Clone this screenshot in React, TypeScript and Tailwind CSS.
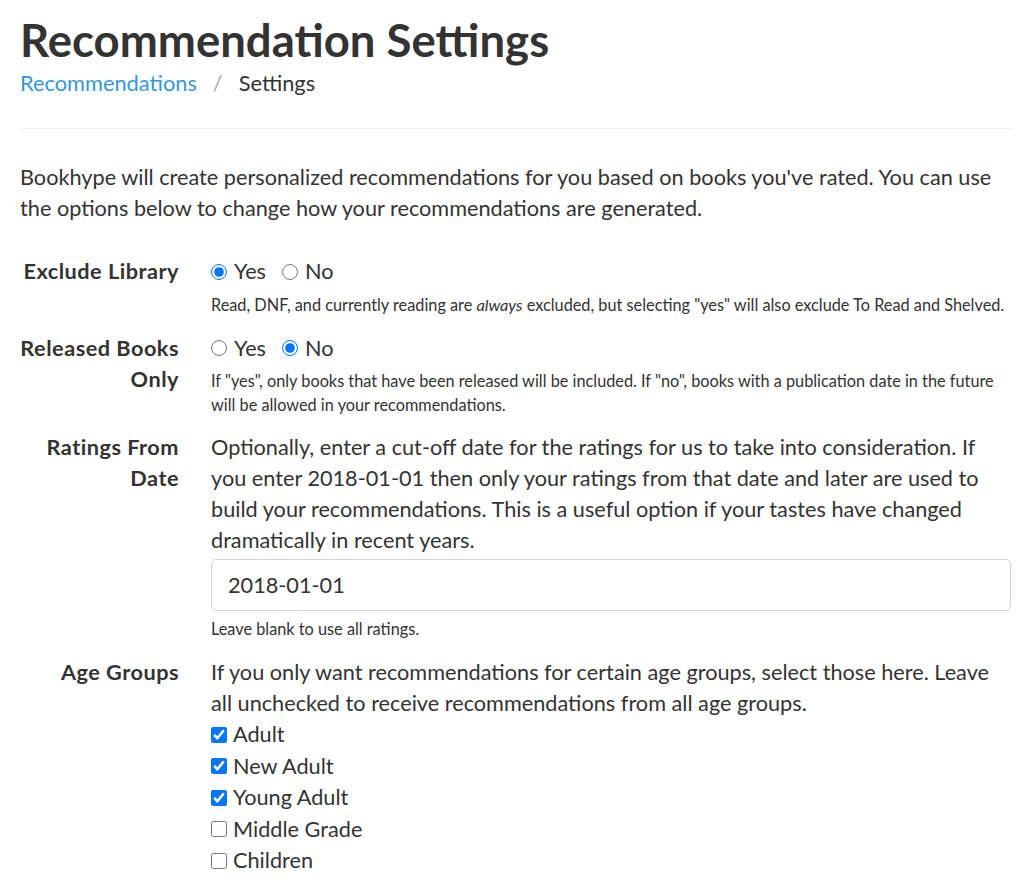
import React from "react";

const font = { fontFamily: 'Lato, "Open Sans", sans-serif' };

function Label({ children }: { children: React.ReactNode }) {
  return (
    <div className="w-[175px] shrink-0 pr-4 text-right font-bold tracking-[0.5px] text-[#333]">
      {children}
    </div>
  );
}

function Radio({ checked, label, name }: { checked: boolean; label: string; name: string }) {
  return (
    <label className="mr-4 inline-flex items-center">
      <input type="radio" name={name} defaultChecked={checked} className="m-0 mr-[7px] h-4 w-4" />
      <span>{label}</span>
    </label>
  );
}

function Check({ checked, label }: { checked: boolean; label: string }) {
  return (
    <label className="flex h-[31.5px] items-center">
      <input type="checkbox" defaultChecked={checked} className="m-0 mr-[6px] h-4 w-4" />
      <span>{label}</span>
    </label>
  );
}

export default function App() {
  return (
    <div className="min-h-screen bg-white px-5 text-[#333]" style={font}>
      <div className="w-[991px]">
        <h1 className="pt-[14px] text-[45.5px] font-bold leading-[52px] text-[#333]">
          Recommendation Settings
        </h1>
        <nav className="mt-[2px] flex items-center text-[21.8px] leading-[30px]">
          <a className="text-[#3498db]" href="#">Recommendations</a>
          <span className="px-4 text-[#aaa]">/</span>
          <span className="text-[#333]">Settings</span>
        </nav>
        <hr className="mt-[30px] border-t border-[#eee]" />
        <div className="mt-[33px] text-[21.7px] leading-[31.2px]">
          <p>
            Bookhype will create personalized recommendations for you based on books you've rated. You can use the
            options below to change how your recommendations are generated.
          </p>

          <div className="mt-[32px] flex">
            <Label>Exclude Library</Label>
            <div className="flex-1 pl-4">
              <div className="flex">
                <Radio name="ex" checked label="Yes" />
                <Radio name="ex" checked={false} label="No" />
              </div>
              <div className="mt-[5px] text-[16.3px] leading-6">
                Read, DNF, and currently reading are <em>always</em> excluded, but selecting "yes" will also exclude To
                Read and Shelved.
              </div>
            </div>
          </div>

          <div className="mt-4 flex">
            <Label>Released Books Only</Label>
            <div className="flex-1 pl-4">
              <div className="flex">
                <Radio name="rel" checked={false} label="Yes" />
                <Radio name="rel" checked label="No" />
              </div>
              <div className="mt-[5px] text-[16.3px] leading-6">
                If "yes", only books that have been released will be included. If "no", books with a publication date
                in the future will be allowed in your recommendations.
              </div>
            </div>
          </div>

          <div className="mt-[15px] flex">
            <Label>Ratings From Date</Label>
            <div className="flex-1 pl-4">
              <div>
                Optionally, enter a cut-off date for the ratings for us to take into consideration. If you enter
                2018-01-01 then only your ratings from that date and later are used to build your recommendations. This
                is a useful option if your tastes have changed dramatically in recent years.
              </div>
              <input
                type="text"
                defaultValue="2018-01-01"
                className="mt-[2px] block h-[52px] w-full rounded-[5px] border border-[#ced4da] px-4 text-[21.7px] text-[#333] outline-none"
                style={font}
              />
              <div className="mt-[6px] text-[16.3px] leading-6">Leave blank to use all ratings.</div>
            </div>
          </div>

          <div className="mt-4 flex">
            <Label>Age Groups</Label>
            <div className="flex-1 pl-4">
              <div>
                If you only want recommendations for certain age groups, select those here. Leave all unchecked to
                receive recommendations from all age groups.
              </div>
              <Check checked label="Adult" />
              <Check checked label="New Adult" />
              <Check checked label="Young Adult" />
              <Check checked={false} label="Middle Grade" />
              <Check checked={false} label="Children" />
            </div>
          </div>
        </div>
      </div>
    </div>
  );
}
